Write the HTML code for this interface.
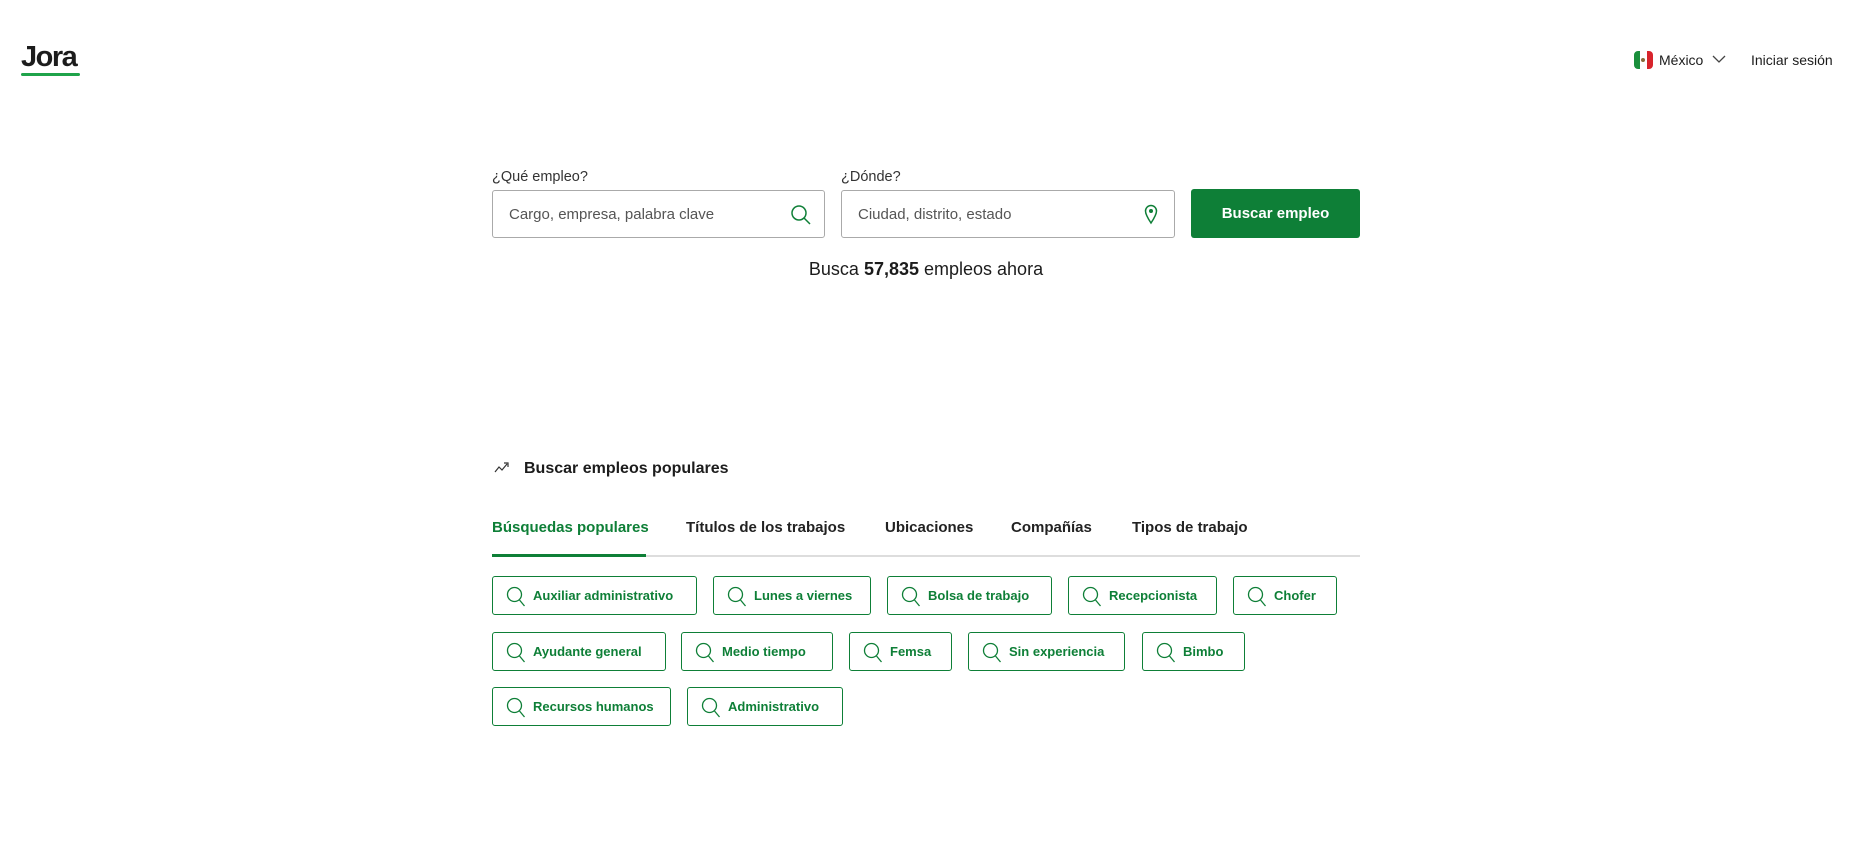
<!DOCTYPE html>
<html><head><meta charset="utf-8"><style>
*{box-sizing:border-box;margin:0;padding:0}
body{width:1855px;height:841px;background:#fff;font-family:"Liberation Sans",Arial,sans-serif;color:#1c1c1c;position:relative;overflow:hidden}
.a{position:absolute}
.logo{left:21px;top:41px;font-size:29px;font-weight:bold;letter-spacing:-1.5px;color:#1c1c1c}
.uline{left:21px;top:73px;width:59px;height:3px;background:#1fa34a;border-radius:2px}
.lbl{font-size:14.5px;color:#333;top:169px}
.inp{top:190px;height:48px;border:1px solid #aaa;border-radius:3px;font-size:15px;color:#555;padding:15px 16px}
.btn{left:1191px;top:189px;width:169px;height:49px;background:#0e7f37;color:#fff;font-weight:bold;font-size:15px;border-radius:3px;text-align:center;line-height:49px}
.tab{top:519px;font-size:15px;font-weight:bold;color:#222}
.chip{height:39px;border:1px solid #0e7f37;border-radius:3px;color:#0e7f37;font-weight:bold;font-size:13px;line-height:37px;padding-left:40px}
.chip svg{position:absolute;left:13px;top:9px}
</style></head><body>
<div class="a logo">Jora</div><div class="a uline"></div>
<div class="a" style="left:1634px;top:51px;width:19px;height:18px;border-radius:4px;overflow:hidden;display:flex"><div style="flex:1;background:#1a8f3c"></div><div style="flex:1;background:#fff;position:relative"><div style="position:absolute;left:1px;top:7px;width:4px;height:4px;border-radius:50%;background:#8a6a3a"></div></div><div style="flex:1;background:#d8242c"></div></div>
<div class="a" style="left:1659px;top:52px;font-size:14px">México</div>
<svg class="a" style="left:1712px;top:55px" width="14" height="9" viewBox="0 0 14 9"><path d="M1 1l6 6 6-6" fill="none" stroke="#444" stroke-width="1.3"/></svg>
<div class="a" style="left:1751px;top:52px;font-size:14px">Iniciar sesión</div>
<div class="a lbl" style="left:492px">¿Qué empleo?</div>
<div class="a lbl" style="left:841px">¿Dónde?</div>
<div class="a inp" style="left:492px;width:333px">Cargo, empresa, palabra clave
<svg class="a" style="right:12px;top:13px" width="22" height="22" viewBox="0 0 22 22"><circle cx="9" cy="9" r="7" fill="none" stroke="#0e7f37" stroke-width="1.5"/><path d="M14 14l6 6" stroke="#0e7f37" stroke-width="1.5"/></svg></div>
<div class="a inp" style="left:841px;width:334px">Ciudad, distrito, estado
<svg class="a" style="right:16px;top:13px" width="14" height="21" viewBox="0 0 14 21"><path d="M7 19C3 13 1.5 10 1.5 7a5.5 5.5 0 0111 0c0 3-1.5 6-5.5 12z" fill="none" stroke="#0e7f37" stroke-width="1.5"/><circle cx="7" cy="7" r="2" fill="#0e7f37"/></svg></div>
<div class="a btn">Buscar empleo</div>
<div class="a" style="left:0;width:1852px;top:259px;text-align:center;font-size:18px">Busca <b>57,835</b> empleos ahora</div>
<svg class="a" style="left:494px;top:461px" width="18" height="12" viewBox="0 0 18 12"><path d="M1 11l4-5 3 3 5-6M10 2h4v4" fill="none" stroke="#333" stroke-width="1.2"/></svg>
<div class="a" style="left:524px;top:460px;font-size:16px;font-weight:bold">Buscar empleos populares</div>
<div class="a tab" style="left:492px;color:#0e7f37">Búsquedas populares</div>
<div class="a tab" style="left:686px">Títulos de los trabajos</div>
<div class="a tab" style="left:885px">Ubicaciones</div>
<div class="a tab" style="left:1011px">Compañías</div>
<div class="a tab" style="left:1132px">Tipos de trabajo</div>
<div class="a" style="left:492px;top:555px;width:868px;height:2px;background:#ddd"></div>
<div class="a" style="left:492px;top:554px;width:154px;height:3px;background:#0e7f37"></div>
<div id="chips"></div>
<script>
var I='<svg width="20" height="22" viewBox="0 0 20 22"><circle cx="8.5" cy="8.5" r="7" fill="none" stroke="#0e7f37" stroke-width="1.3"/><path d="M13.5 14l5 6" stroke="#0e7f37" stroke-width="1.3"/></svg>';
var c=[[576,[[492,697,"Auxiliar administrativo"],[713,871,"Lunes a viernes"],[887,1052,"Bolsa de trabajo"],[1068,1217,"Recepcionista"],[1233,1337,"Chofer"]]],
[632,[[492,666,"Ayudante general"],[681,833,"Medio tiempo"],[849,952,"Femsa"],[968,1125,"Sin experiencia"],[1142,1245,"Bimbo"]]],
[687,[[492,671,"Recursos humanos"],[687,843,"Administrativo"]]]];
var h='';c.forEach(function(r){r[1].forEach(function(x){h+='<div class="a chip" style="left:'+x[0]+'px;top:'+r[0]+'px;width:'+(x[1]-x[0])+'px">'+I+x[2]+'</div>';});});
document.getElementById('chips').innerHTML=h;
</script>
</body></html>
